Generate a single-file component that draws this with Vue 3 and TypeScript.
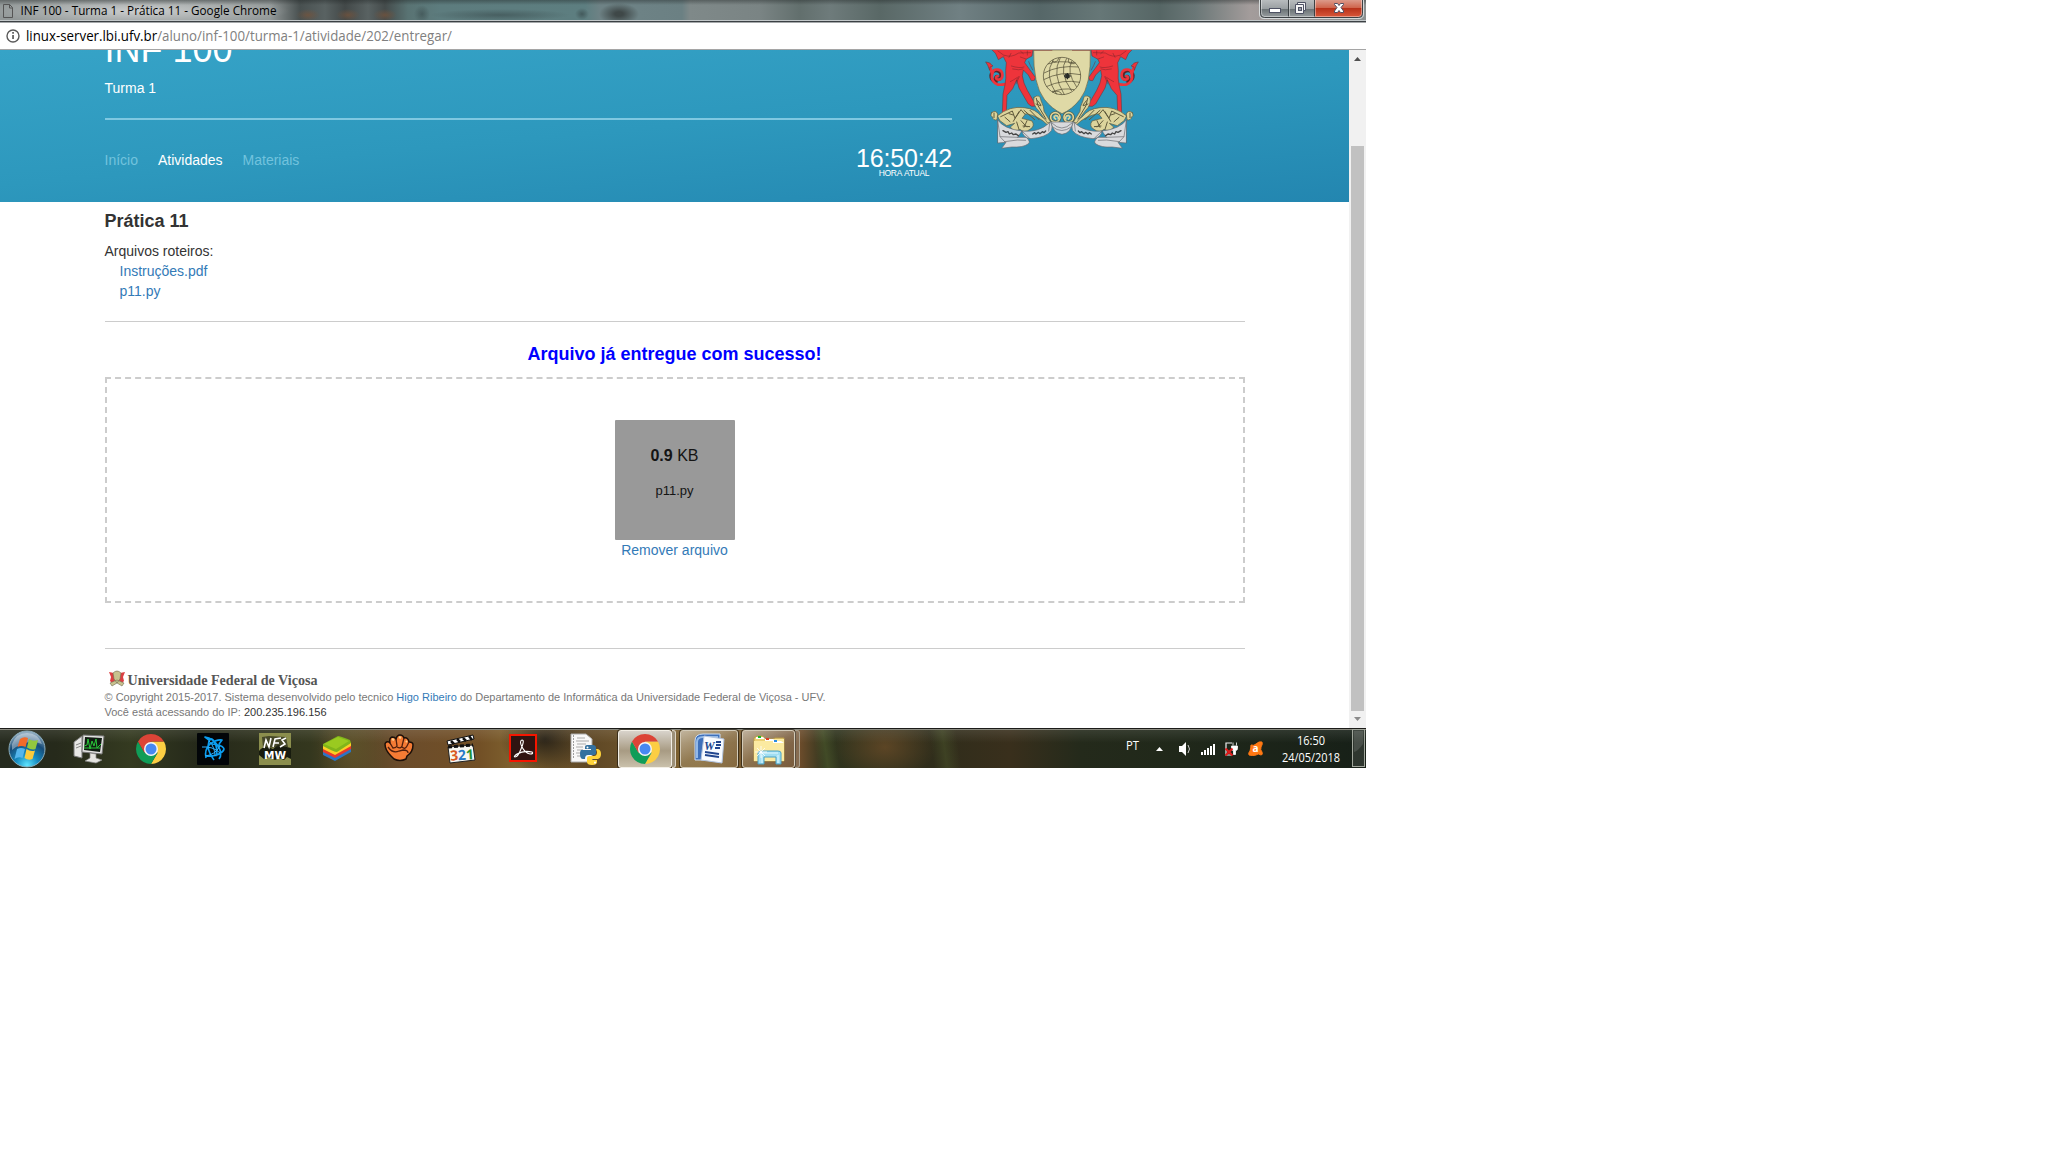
<script setup lang="ts">
const navItems: { label: string; active: boolean }[] = [
  { label: 'Início', active: false },
  { label: 'Atividades', active: true },
  { label: 'Materiais', active: false },
]
const files: string[] = ['Instruções.pdf', 'p11.py']
const mirrored: string[] = ['', 'translate(552 0) scale(-1 1)']
</script>

<template>
  <div class="desktop">
    <div class="titlebar">
      <svg class="title" width="700" height="23" viewBox="0 0 700 23">
        <path d="M3.500 4.500h6l3 3v10h-9zM9.500 4.500v3.500h3" fill="none" stroke="#555" />
        <text x="20.500" y="15" textLength="256" lengthAdjust="spacingAndGlyphs">INF 100 - Turma 1 - Prática 11 - Google Chrome</text>
      </svg>
      <svg class="controls" width="106" height="20" viewBox="0 0 106 20">
        <defs>
          <linearGradient id="ctl" x2="0" y2="1"><stop offset="0" stop-color="#b8bcbe" /><stop offset=".48" stop-color="#9a9fa2" /><stop offset=".52" stop-color="#6c7376" /><stop offset="1" stop-color="#9ca2a4" /></linearGradient>
          <linearGradient id="cls" x2="0" y2="1"><stop offset="0" stop-color="#dc9a8a" /><stop offset=".45" stop-color="#cf654d" /><stop offset=".5" stop-color="#b8321a" /><stop offset="1" stop-color="#d9583a" /></linearGradient>
        </defs>
        <path d="M1 0v14q0 4 4 4h95q4 0 4-4V0z" fill="url(#ctl)" />
        <path d="M56 0h47v14q0 3-4 3H56z" fill="url(#cls)" />
        <path d="M.5 0v14q0 4.500 4.500 4.500h95q4.500 0 4.500-4.500V0" fill="none" stroke="#d5dadb" />
        <path d="M1.500 0v13.500q0 4 4 4h94q4 0 4-4V0M29.500 0v17M55.500 0v17" fill="none" stroke="#3c4144" />
        <path d="M30.500 0v16M56.500 0v16M2.500 0v13q0 3.500 3 3.500h94q3 0 3-3V0" fill="none" stroke="#fff" opacity=".4" />
        <rect x="10.500" y="8.500" width="11" height="4" fill="#fff" stroke="#4e5264" />
        <path d="M38.500 2.500h8v8h-2v3h-8v-9h2z" fill="#f4f4f5" stroke="#4e5264" />
        <path d="M38 4.500h6.500v6" fill="none" stroke="#4e5264" />
        <rect x="39.500" y="7.500" width="3" height="3" fill="#9b9da7" stroke="#4e5264" />
        <path d="M75.500 3.500h3l1.500 2 1.500-2h3v1l-2.500 3 2.500 3.500v1.500h-3l-1.500-2-1.500 2h-3V11l2.500-3.500-2.500-3z" fill="#fff" stroke="#514e62" />
      </svg>
    </div>
    <div class="urlbar">
      <svg width="500" height="26" viewBox="0 0 500 26">
        <circle cx="13" cy="13" r="6" fill="none" stroke="#5a5a5a" stroke-width="1.400" />
        <path d="M12.200 12h1.700v4h-1.700zM12.200 9h1.700v1.700h-1.700z" fill="#5a5a5a" />
        <text x="26" y="18" fill="#808080" textLength="426" lengthAdjust="spacingAndGlyphs"><tspan fill="#000">linux-server.lbi.ufv.br</tspan>/aluno/inf-100/turma-1/atividade/202/entregar/</text>
      </svg>
    </div>
    <div class="viewport">
      <div class="page">
        <header class="banner">
          <div class="heading">
            <h1>INF 100</h1>
            <p class="group">Turma 1</p>
            <div class="bottom">
              <nav>
                <a v-for="n in navItems" :key="n.label" :class="{ active: n.active }">{{ n.label }}</a>
              </nav>
              <div class="clock"><span class="time">16:50:42</span><span class="caption">HORA ATUAL</span></div>
            </div>
          </div>
          <svg class="crest" width="155" height="100" viewBox="45 30 465 300">
            <g v-for="m in mirrored" :key="m" :transform="m || undefined" stroke-linejoin="round" stroke-linecap="round">
              <path d="M78 126C56 118 60 92 78 92c17 0 21 24 6 27-8 1-9-9-3-10" fill="none" stroke="#5b2527" stroke-width="10" />
              <path d="M58 72q6 20 8 30-4 24 18 32 22 2 34-8M67 102q2-16 17-13c18 4 17 28 2 30-9 0-10-10-3-11" fill="none" stroke="#ee343b" stroke-width="8" />
              <path d="M48 66l9 2 12 10-9 3-1 10-5-13z" fill="#ee343b" stroke="#6b2c2e" stroke-width="1.500" />
              <path d="M65 28h124l-3 20-18 10-4 10 16 22 16 22-3 9-9 1-9-17-15-15-3 17 5 22 10 22 22 38 6 9-15 1-10-7-28-48-7-24-12 26-17 20-2 48 11 9-18 1-5-6 2-56 6-28q4-18 2-42l2-24-9-18-15 9-8-18z" fill="#ee343b" stroke="#6b2c2e" stroke-width="1.500" />
              <path d="M84 33l19 14M104 46q20 8 42-7l36-1M123 40l-6 12M151 51l17 6M124 78q26 8 38 3M128 87q20 5 31 0M145 110q-5 7-6 14M148 110l-10 22M121 125q10-5 20-12M176 65q4 11 12 25M152 34l8 7M172 33v12" fill="none" stroke="#7a252a" stroke-width="1.500" />
              <path d="M65 218q12-10 18 4l-2 17q-11 4-14-9-7-1-2-12zM83 227q36-30 79-24 35 3 54 28l25 18-8 6q-27-28-66-34l-11 14 30 8q10 16-6 25-17 13-30 0-18 10-29-7l13-11-24 7-20-15z" fill="#dcd49c" stroke="#605a3c" stroke-width="2" />
              <path d="M192 172q18-13 21 10 10 20 9 32l20 32-9 3-27-37q-19-17-14-40z" fill="#dcd49c" stroke="#605a3c" stroke-width="2" />
              <path d="M199 175l5 22 24 40M203 182l10 13M198 192l14 5M92 230l35-17 8 22 18-26 12 14M105 232l15 13M117 221l13 4M147 215l-17 29M162 211l32 28M180 211l27 28M153 242l17 19M140 246l7 22M171 242l-9 20M179 260l-20-2M72 219v14" fill="none" stroke="#605a3c" stroke-width="3" />
              <circle cx="256" cy="232" r="14" fill="none" stroke="#5b5737" stroke-width="9" />
              <circle cx="256" cy="232" r="14" fill="none" stroke="#dcd49c" stroke-width="5" />
              <path d="M257 237q-9-6-1-10 10-1 9 10" fill="none" stroke="#dcd49c" stroke-width="5" />
              <path d="M83 240q19 27 73 33l-13 19h26q15 15 5 20-15 11-49 9l-30 4 13-18-24 2z" fill="#d9dadd" stroke="#66686c" stroke-width="2" />
              <path d="M156 273q49 6 82-24l4-4q8 14 2 27-15 20-61 24-24-2-27-23z" fill="#d9dadd" stroke="#66686c" stroke-width="2" />
              <path d="M83 241l7 49 14 15M91 290l52 2M104 305l38-5 25 1M239 250l-3 23M157 274l21 20" fill="none" stroke="#66686c" stroke-width="2" />
              <path d="M99 272l9 5 6-2 4 7 7-3 5 5 8-2 7 5" fill="none" stroke="#444" stroke-width="4" />
              <path d="M188 282l6-4 4 4 7-5 5 4 7-6 5 3 5-5" fill="none" stroke="#444" stroke-width="4" />
            </g>
            <path d="M243 246h66q-6 34-33 37-27-3-33-37z" fill="#d9dadd" stroke="#66686c" stroke-width="2" />
            <path d="M246 249q29 30 60 0M247 260q28 23 58 0" fill="none" stroke="#66686c" stroke-width="2" />
            <path d="M191 30h170q3 106-31 148-24 31-54 43-30-14-53-43-34-44-32-148z" fill="#dfd9a6" stroke="#6a6242" stroke-width="2" />
            <path d="M191 31h56M306 31h55" stroke="#8d423c" stroke-width="2" />
            <g fill="none" stroke="#47432e" stroke-width="2">
              <circle cx="276" cy="108" r="56" />
              <path d="M234 72q30-12 84-3M222 99q45-24 103-18M221 119q51-27 111-15M229 140q48-23 101-13M247 157q28-15 66-8M250 59q-29 46 10 104M271 53q-27 48 12 111M290 55q-26 40 15 98M306 62q-18 33 14 79M246 63q15 8 21-10M296 57q-6 16 18 14M246 154q26-3 29 9" />
            </g>
            <path d="M292 99v19M282 108h20M286 102l12 12M298 102l-12 12" stroke="#272b27" stroke-width="4" />
          </svg>
        </header>
        <main>
          <h2>Prática 11</h2>
          <div class="files">Arquivos roteiros:<a v-for="f in files" :key="f">{{ f }}</a></div>
          <hr class="sep" />
          <h3>Arquivo já entregue com sucesso!</h3>
          <div class="drop">
            <div class="file"><span class="size"><b>0.9</b> KB</span><span class="name">p11.py</span></div>
            <a>Remover arquivo</a>
          </div>
          <hr class="foot-sep" />
          <footer>
            <svg class="ufv" width="220" height="22" viewBox="0 0 220 22">
              <path d="M4 3l5 1 3-2 3 2 5-1-2 5 1 4-2 2-5-4-5 4-2-2 1-4z" fill="#dc3f42" />
              <path d="M8 4q4-4 8 0l-1 6-3 4-3-4zM5 14l7-3 7 3-2 3-5-3-5 3z" fill="#c8c28e" stroke="#716d51" stroke-width=".6" />
              <text x="22.500" y="16" textLength="190" lengthAdjust="spacingAndGlyphs">Universidade Federal de Viçosa</text>
            </svg>
            <p class="copy">© Copyright 2015-2017. Sistema desenvolvido pelo tecnico <a>Higo Ribeiro</a> do Departamento de Informática da Universidade Federal de Viçosa - UFV.</p>
            <p class="ip">Você está acessando do IP: <span>200.235.196.156</span></p>
          </footer>
        </main>
      </div>
      <div class="scrollbar">
        <svg width="17" height="17"><path d="M5 11l3.500-4 3.500 4z" fill="#505050" /></svg>
        <div class="thumb"></div>
        <svg width="17" height="17"><path d="M5 6h7l-3.500 4z" fill="#8b8b8b" /></svg>
      </div>
    </div>

    <div class="taskbar">
      <div class="slot orb">
        <svg width="40" height="40" viewBox="0 0 40 40">
          <defs>
            <radialGradient id="orb" cx=".5" cy=".95" r=".9"><stop offset="0" stop-color="#5fe5ff" /><stop offset=".35" stop-color="#168bc0" /><stop offset=".7" stop-color="#174c78" /><stop offset="1" stop-color="#8fabc0" /></radialGradient>
          </defs>
          <circle cx="20" cy="20" r="18" fill="url(#orb)" stroke="#8badbb" />
          <path d="M5 15q4-11 15-11t15 11q-15-6-30 6z" fill="#fff" opacity=".38" />
          <path d="M13 10q4-3 8-1l-2.500 9q-4-2-8 0z" fill="#f26b2a" />
          <path d="M22 10q4 3 9 1l-2.500 9q-4 1.500-8.500-1.500z" fill="#93c83e" />
          <path d="M10 20q4-2 8 0l-2.500 9q-4-2-8 1z" fill="#54b5ec" />
          <path d="M19.500 20q4 3 8.500 1.500l-2.500 8.500q-4 2-8-1z" fill="#fccb3c" />
        </svg>
      </div>
      <div class="slot">
        <svg width="32" height="32" viewBox="0 0 32 32">
          <path d="M1 9l8-6v22l-8-2z" fill="#e8e8e6" stroke="#777" /><path d="M3 12l5-2M3 15l5-2" stroke="#888" />
          <path d="M10 2l21 1-2 18-20-2z" fill="#e3e3e1" stroke="#777" />
          <path d="M12 4l17 1-2 14-16-2z" fill="#111c12" />
          <path d="M11 13l3-1 1-6 2 10 2-8 2 5 2-7 1 9 4-4M11 15h16" stroke="#28c638" fill="none" />
          <path d="M17 20l6 1v4l6 2-6 3-11-2 5-3z" fill="#e4e4df" stroke="#888" stroke-width=".7" />
        </svg>
      </div>
      <div class="slot">
        <svg width="32" height="32" viewBox="0 0 32 32"><path d="M16 8.500h12.990A15 15 0 0 1 16 31l6.500-11z" fill="#fcce43" /><path d="M16 16l6.500 3.750L16 31A15 15 0 0 1 3.010 8.500L9.500 19.750z" fill="#109d58" /><path d="M3.010 8.500A15 15 0 0 1 29 8.500H16L9.500 19.750z" fill="#dc4437" /><circle cx="16" cy="16" r="7" fill="#f4f5f5" /><circle cx="16" cy="16" r="5.500" fill="#4688f1" /></svg>
      </div>
      <div class="slot">
        <svg width="32" height="32" viewBox="0 0 32 32"><rect width="32" height="32" rx="1" fill="#020508" /><g fill="none" stroke="#0a9df0" stroke-width="1.700" stroke-linejoin="round"><path d="M17 27Q9 17 12 8q3-5 6 2 3 6 1 13M8 23q11 1 17-4 5-4-3-7l-7-1M9 25q-2-8 4-14 7-5 12-4l-3 4M12 7L8 4q8 1 13 9 5 8 1 13" /></g><path d="M12 8q6 6 6 15M8 23q10-1 15-10M5 14q11-1 18 6" stroke="#2fb2ff" fill="none" /></svg>
      </div>
      <div class="slot">
        <svg class="nfs" width="32" height="32" viewBox="0 0 32 32"><rect width="32" height="32" fill="#8b8e4d" /><path d="M0 18q5-7 14-2l5-4 13 3v11l-4-2-3 3-5-2-4 2-6-3-5 2-5-4z" fill="#171b0e" /><path d="M3 4l7-1 17 1 2 10-25 1z" fill="#282a18" opacity=".7" /><path d="M5 15l2-8 3 7 2-9M14 14l2-8 6-1M15 10h5M27 5l-4 2 3 4-5 3" fill="none" stroke="#fff" stroke-width="1.600" /><text x="5" y="25.500" textLength="22" lengthAdjust="spacingAndGlyphs">MW</text></svg>
      </div>
      <div class="slot">
        <svg width="32" height="32" viewBox="0 0 32 32"><path d="M2 19l16-8 12 5v3l-16 9L2 22z" fill="#2a75c6" /><path d="M2 16l16-8 12 5v3l-16 9L2 19z" fill="#e7392c" /><path d="M2 13l16-8 12 5v3l-16 9L2 16z" fill="#fdce24" /><path d="M2 11L17 3q2 0 12 4l1 3-14 9q-3 0-14-6z" fill="#80b51b" /><path d="M3 11l14-7 11 4-13 8z" fill="#9aca20" /></svg>
      </div>
      <div class="slot">
        <svg width="32" height="32" viewBox="0 0 32 32"><path d="M8 23Q2 17 2 11q1-3 4-2l1 1q-1-5 2-6 3 0 4 2 1-4 4-4t4 3q4-1 5 4 4 0 4 3 0 7-6 11l-1 3q-6 3-12 0z" fill="#f47b34" stroke="#1d1009" stroke-width="1.500" /><path d="M7 10l3 5q3 0 4-2L13 6M14 14q4 2 5-1l2-8M19 14q3 3 5-1l2-4M5 14q5 7 11 4l4-1q5 0 5 3" fill="none" stroke="#52200d" stroke-width="1.300" /><path d="M9 6l2 1M16 4l2 1M23 8l1 1" stroke="#ffcf8c" stroke-width="2" /></svg>
      </div>
      <div class="slot">
        <svg class="mpc" width="32" height="32" viewBox="0 0 32 32"><path d="M3 14l25-2 2 15-25 3z" fill="#f7f7f2" stroke="#222" /><path d="M2 8l26-6 1 4-26 6z" fill="#fff" stroke="#111" /><path d="M6 8l3 3M12 6l3 3M18 5l3 3M24 3l3 4" stroke="#111" stroke-width="2.500" /><path d="M3 14l25-2" stroke="#111" stroke-width="3" stroke-dasharray="4 2" /><g transform="rotate(-4 16 22)"><text x="5" y="27" fill="#d95821">3</text><text x="13" y="27" fill="#277ac7">2</text><text x="21" y="27" fill="#259132">1</text></g></svg>
      </div>
      <div class="slot">
        <svg width="32" height="32" viewBox="0 0 32 32"><rect x="3" y="2" width="26" height="26" fill="#301411" stroke="#f51500" stroke-width="2" /><path d="M15 7q-3 1 0 7 3 6 8 7 4 0 2-2-8-2-15 2-4 3-2 3 3 0 6-8 4-9 1-9z" fill="none" stroke="#fff" stroke-width="1.100" /></svg>
      </div>
      <div class="slot">
        <svg width="32" height="32" viewBox="0 0 32 32"><path d="M2 1h15l6 5v23H2z" fill="#f8f8f8" stroke="#aaa" /><path d="M4 3h1M4 6h1M4 9h1M4 12h1M4 15h1M4 18h1M4 21h1M4 24h1" stroke="#444" /><path d="M8 5h8M7 8h13M8 11h9M7 14h7M8 17h6M7 20h5M8 23h4" stroke="#aaa" /><path d="M18 12h6q3 0 3 3v5q0 2-3 2h-5q-3 0-3 4h-2q-3 0-3-5t3-4h8v-1h-6v-2q0-2 2-2z" fill="#34719f" /><path d="M27 16h2q3 1 3 5t-3 5h-6v1h5v2q0 3-5 3t-5-3v-4q0-2 3-2h4q3 0 3-4z" fill="#ffd43b" /><circle cx="18.500" cy="14.500" r="1" fill="#fff" /><circle cx="26" cy="29.500" r="1" fill="#fff" /></svg>
      </div>
      <div class="win chrome-win">
        <svg width="32" height="32" viewBox="0 0 32 32"><path d="M16 8.500h12.990A15 15 0 0 1 16 31l6.500-11z" fill="#fcce43" /><path d="M16 16l6.500 3.750L16 31A15 15 0 0 1 3.010 8.500L9.500 19.750z" fill="#109d58" /><path d="M3.010 8.500A15 15 0 0 1 29 8.500H16L9.500 19.750z" fill="#dc4437" /><circle cx="16" cy="16" r="7" fill="#f4f5f5" /><circle cx="16" cy="16" r="5.500" fill="#4688f1" /></svg>
      </div>
      <div class="stack lit"></div>
      <div class="win word-win">
        <svg class="word" width="32" height="32" viewBox="0 0 32 32"><path d="M2 27V8q0-7 8-7h17v7q-13 0-15 6v13z" fill="#3e70ba" stroke="#c9dcf5" /><path d="M4 25V9q0-5 6-5h15" fill="none" stroke="#94bae8" stroke-width="2" /><path d="M11 3l20 3-2 24-21-3z" fill="#f8fbff" stroke="#b3c4de" /><text x="11" y="17">W</text><path d="M23 9h5M23 12h5M22 15h5M12 19l14 2M12 22l14 2" stroke="#20458e" stroke-width="1.800" /></svg>
      </div>
      <div class="win explorer-win">
        <svg width="34" height="32" viewBox="0 0 34 32"><path d="M2 28V5l3-2h6l2 3h8l2-1h9v23z" fill="#ecd075" stroke="#b69a4a" /><path d="M2 8h14l2-2h14v22H2z" fill="#fbeaa1" /><path d="M4 4h7l2 2h-9zM13 6h8l2 2H13zM21 8h8l3 2H21z" fill="#fff" /><path d="M6 3h3v2H6z" fill="#16b625" /><path d="M14 5h3v2h-3z" fill="#df3d25" /><path d="M22 7h3v2h-3z" fill="#2b8ce2" /><path d="M6 31V20q0-2 3-2h17q3 0 3 2v11h-5v-7H12v7z" fill="#a1def2" stroke="#4aa2c3" /><path d="M8 20h18M10 22v8M26 22v8" stroke="#dff7ff" /><path d="M9 13v12M3 19h12M5 15l8 8M13 15l-8 8" stroke="#fff" stroke-width=".8" /></svg>
      </div>
      <div class="stack"></div>
      <svg class="tray" width="260" height="40" viewBox="1106 728 260 40">
        <text x="1126" y="750" textLength="13" lengthAdjust="spacingAndGlyphs">PT</text>
        <path d="M1156 751l3.500-4 3.500 4z" fill="#fff" />
        <path d="M1179 746h3l4-4v14l-4-4h-3z" fill="#fff" /><path d="M1188 745q3 4 0 8" fill="none" stroke="#ccc" />
        <path d="M1201 752h2v3h-2zM1204 750h2v5h-2zM1207 748h2v7h-2zM1210 746h2v9h-2zM1213 744h2v11h-2z" fill="#fff" />
        <path d="M1232 743h-6v12h6" fill="none" stroke="#eee" stroke-width="1.200" /><path d="M1231.500 746h6v2.500q0 2-2 2v4h-2v-4q-2 0-2-2zM1233 742.500v3M1236.500 742.500v3" fill="#fff" stroke="#fff" stroke-width=".8" /><path d="M1225.500 748.500l7 7M1232.500 748.500l-7 7" stroke="#e11b1b" stroke-width="2" />
        <path d="M1251 745q3 1 5-1 3-3 6-2 1 2-1 5-1 3 1 5 1 3-1 3-3-2-5 0-3 1-7 0-1-2 1-4 1-3 1-6z" fill="#ff7812" stroke="#ff7812" stroke-linejoin="round" /><text class="av" x="1252.500" y="752">a</text>
        <text x="1297" y="745" textLength="28" lengthAdjust="spacingAndGlyphs">16:50</text>
        <text x="1282" y="762" textLength="58" lengthAdjust="spacingAndGlyphs">24/05/2018</text>
        <rect x="1352.500" y="729.500" width="12" height="37" fill="#fff" fill-opacity=".1" stroke="#a1a69c" /><path d="M1354 731h9v13q-5 7-9 8z" fill="#fff" opacity=".12" />
      </svg>
    </div>
  </div>
</template>

<style>
body { background: #fff; }
</style>

<style scoped>
* { box-sizing: border-box; }
.desktop { width: 1366px; height: 768px; overflow: hidden; display: flex; flex-direction: column; font-family: "Liberation Sans", Arial, sans-serif; font-size: 14px; line-height: 20px; color: #333; }
svg { display: block; flex: none; }
h1, h2, h3, p, hr { margin: 0; }
a { color: #337ab7; }
.titlebar {
  height: 23px; flex: none; display: flex; justify-content: space-between;
  border-bottom: 1px solid #a6a9ab; box-shadow: inset 0 -1px #3c4144, inset 0 -2px #c3c8ca;
  background:
    linear-gradient(rgba(30,35,35,.4), transparent 5px),
    radial-gradient(ellipse 150px 15px at 140px 11px, rgba(235,235,235,.65), transparent),
    radial-gradient(ellipse 12px 6px at 308px 15px, rgba(120,84,58,.7), transparent),
    radial-gradient(ellipse 12px 6px at 348px 15px, rgba(120,84,58,.7), transparent),
    radial-gradient(ellipse 12px 6px at 385px 15px, rgba(120,84,58,.7), transparent),
    radial-gradient(ellipse 8px 9px at 422px 14px, rgba(50,65,67,.5), transparent),
    radial-gradient(ellipse 70px 6px at 500px 15px, rgba(50,65,67,.5), transparent),
    radial-gradient(ellipse 7px 6px at 582px 14px, rgba(50,65,67,.6), transparent),
    radial-gradient(ellipse 20px 11px at 619px 14px, #3f4848 20%, transparent),
    linear-gradient(90deg, #929898 0, #929898 270px, #485050 300px, #596262 325px, #424848 345px, #596262 368px, #444b4b 385px, #597373 408px, #5d7c7e 440px, #5d7e80 585px, #6e8285 600px, #6d8285 640px, #6b8083 682px, #7f8989 690px, #7a8484 760px, #626f6d 800px, #6e7b7b 830px, #596866 880px, #708083 960px, #566768 1040px, #667777 1100px, #566665 1160px, #6a7777 1195px, #a39c9b 1250px, #8c9090 1366px);
}
.title text { font: 12px "Open Sans", sans-serif; fill: #000; }
.controls { margin-right: 1px; }
.urlbar { height: 27px; flex: none; border-bottom: 1px solid #a5a5a5; background: #fff; }
.urlbar text { font: 14px "Open Sans", sans-serif; }
.viewport { display: flex; height: 678px; flex: none; background: #fff; }
.page { width: 1349px; overflow: hidden; }
.banner { height: 152px; display: flex; padding-left: 104.5px; overflow: hidden; background: linear-gradient(175deg, #36a3c7 0, #2d98bd 50%, #2386b0 100%); }
.heading { width: 847.5px; color: #fff; }
h1 { font-size: 36px; line-height: 40px; font-weight: 400; margin-top: -20px; }
.group { margin-top: 8px; height: 40px; }
.bottom { border-top: 2px solid #7fc8e1; display: flex; justify-content: space-between; }
nav { display: flex; gap: 20px; padding-top: 30px; }
nav a { color: #72c3dd; }
nav a.active { color: #fff; }
.clock { display: flex; flex-direction: column; align-items: center; padding-top: 25px; }
.time { font-size: 25px; line-height: 26px; letter-spacing: -.15px; }
.caption { font-size: 8.500px; line-height: 8px; letter-spacing: -.3px; word-spacing: .8px; margin-top: -2px; }
.crest { margin-left: 33px; }
main { width: 1140px; margin-left: 104.5px; }
h2 { font-size: 18px; line-height: 20px; padding-top: 9px; }
.files { display: flex; flex-direction: column; padding-top: 10px; }
.files a { padding-left: 15px; }
hr { border: 0; height: 1px; background: #ccc; }
.sep { margin-top: 20px; }
h3 { color: #00f; font-size: 18px; line-height: 20px; text-align: center; margin-top: 22px; }
.drop { height: 226px; margin-top: 13px; border: 2px dashed #ccc; display: flex; flex-direction: column; align-items: center; padding-top: 41px; }
.file { width: 120px; height: 120px; background: #999; border-radius: 1px; color: #141414; display: flex; flex-direction: column; align-items: center; padding-top: 25px; }
.size { font-size: 16px; line-height: 22px; }
.name { font-size: 13px; line-height: 18px; margin-top: 15px; }
.drop > a { line-height: 20px; }
.foot-sep { margin-top: 45px; }
footer { font-size: 11px; line-height: 15px; color: #777; padding-top: 20px; }
.ufv { margin-bottom: -1px; }
.ufv text { font: bold 14px "Liberation Serif", serif; fill: #555; }
.copy { white-space: nowrap; }
.ip span { color: #333; }
.scrollbar { width: 17px; background: #f1f1f1; display: flex; flex-direction: column; align-items: center; }
.thumb { width: 13px; height: 565px; margin-top: 79px; background: #c1c1c1; }
.taskbar {
  height: 40px; flex: none; display: flex; align-items: center; border-top: 1px solid #1c1c19; box-shadow: inset 0 1px #8a8a80;
  background:
    linear-gradient(rgba(255,255,255,.1), transparent 14px),
    radial-gradient(ellipse 45px 35px at 545px 10px, #2b2418, transparent),
    radial-gradient(ellipse 35px 50px at 352px 20px, rgba(98,86,43,.7), transparent),
    linear-gradient(82deg, transparent 810px, rgba(83,96,47,.5) 820px, transparent 832px, transparent 925px, rgba(81,95,47,.4) 938px, transparent 952px),
    radial-gradient(ellipse 50px 35px at 885px 18px, rgba(103,74,39,.8), transparent),
    linear-gradient(90deg, #252a1e 0, #262a1b 55px, #343a20 130px, #25291a 200px, #34371e 310px, #4c4224 345px, #6b4c2b 400px, #725026 480px, #816430 520px, #5e4725 590px, #836633 700px, #6c4c2b 800px, #30351e 825px, #302d1b 940px, #392f1c 1010px, #242a1b 1080px, #20281a 1180px, #172018 1366px);
}
.slot { width: 62px; height: 38px; flex: none; display: flex; align-items: center; justify-content: center; }
.orb { width: 54px; margin-right: 4px; }
.win { height: 38px; flex: none; display: flex; align-items: center; justify-content: center; border: 1px solid #d2cab8; border-radius: 3px; box-shadow: 0 0 0 1px rgba(25,20,10,.6); background: linear-gradient(150deg, rgba(255,255,255,.48), rgba(255,255,255,.15) 50%, rgba(255,255,255,.08)); }
.chrome-win { width: 54px; margin-left: 2px; background: linear-gradient(#d8d3cb, #a89b83 55%, #c9c0ab); border-color: #f2eee5; }
.word-win { width: 58px; margin-left: 4px; }
.explorer-win { width: 53px; margin-left: 4px; }
.stack { width: 5px; height: 38px; flex: none; border: 1px solid #aaa18e; border-left: 0; border-radius: 0 3px 3px 0; background: rgba(255,255,255,.18); }
.stack.lit { width: 4px; background: #9c9079; border-color: #ded6c7; }
.nfs text { font: bold 11px "DejaVu Sans", sans-serif; fill: #fff; }
.mpc text { font: bold 14px "Open Sans", sans-serif; }
.word text { font: italic bold 12px "Liberation Serif", serif; fill: #20458e; }
.tray { margin-left: auto; margin-top: -1px; }
.tray text { font: 12px "Open Sans", sans-serif; fill: #fff; }
.tray .av { font: bold 10px "Open Sans", sans-serif; }
</style>
